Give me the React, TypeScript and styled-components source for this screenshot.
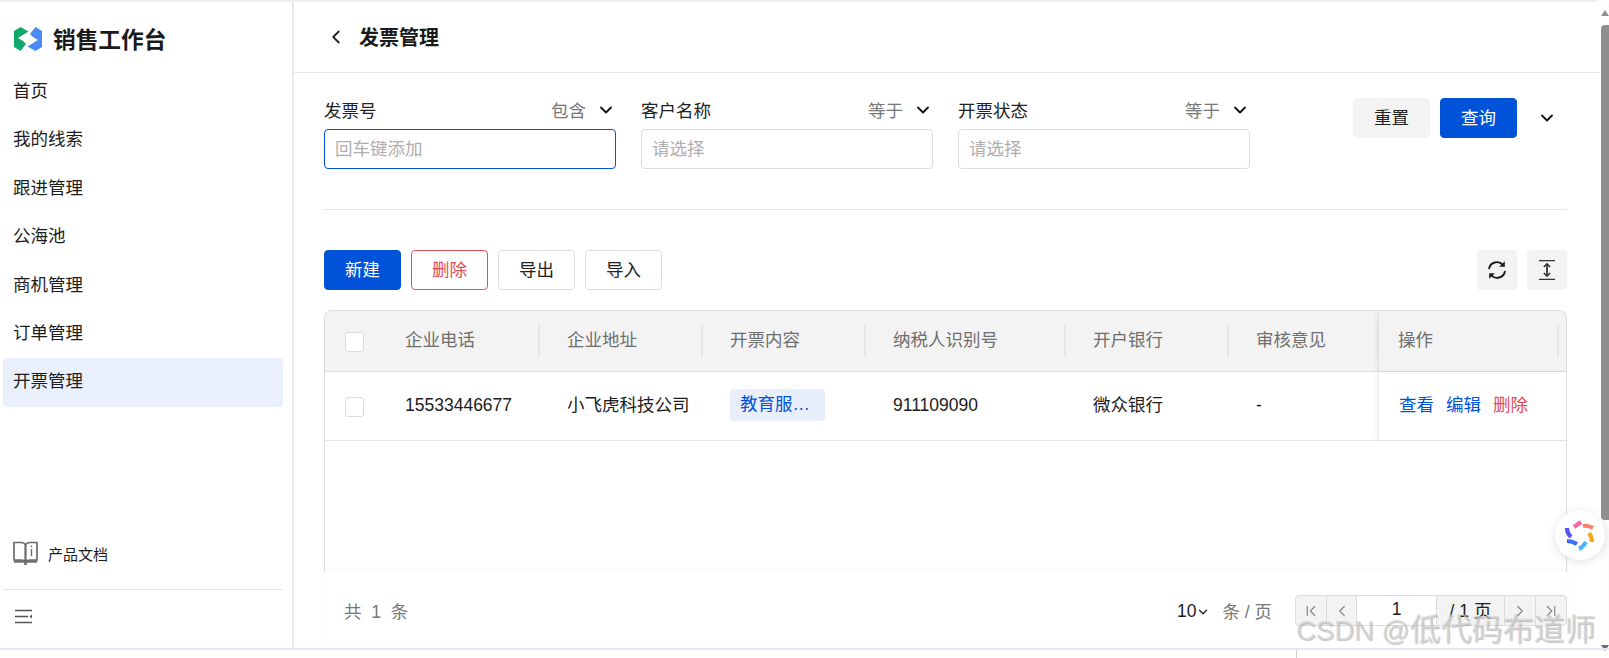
import React from 'react';
import styled, { createGlobalStyle } from 'styled-components';
import { ChevronDown, ChevronFirst, ChevronLast, ChevronLeft, ChevronRight } from 'lucide-react';

const menus = ['首页', '我的线索', '跟进管理', '公海池', '商机管理', '订单管理', '开票管理'];

const filters = [
  { label: '发票号', op: '包含', placeholder: '回车键添加', active: true },
  { label: '客户名称', op: '等于', placeholder: '请选择', active: false },
  { label: '开票状态', op: '等于', placeholder: '请选择', active: false },
];

const columns = ['企业电话', '企业地址', '开票内容', '纳税人识别号', '开户银行', '审核意见'];

const petals = [
  { d: 'M19 17 L26 12', c: '#f2689f' },
  { d: 'M28 16 Q33 15 38 18', c: '#fb8268' },
  { d: 'M34 23 Q37 27 37 32', c: '#f5a623' },
  { d: 'M24 39 Q28 37 31 32', c: '#4fb4fb' },
  { d: 'M12 31 Q17 31 22 34', c: '#3f6cf5' },
  { d: 'M12 18 Q12 23 16 27', c: '#5550f0' },
];

const App = () => {
  return (
    <Page>
      <GlobalStyle />
      <TopStrip />
      <Shell>
        <Sidebar>
          <Logo>
            <svg width="28" height="24" viewBox="0 0 28 24">
              <polygon points="0,4 6.5,0 14.5,4.5 4,11 9,14 12,17 6.5,24 0,20" fill="#10a96b" />
              <polygon points="28,20 21.5,24 13.5,19.5 24,13 19,10 16,7 21.5,0 28,4" fill="#4b8bf5" />
            </svg>
            <LogoText>销售工作台</LogoText>
          </Logo>
          <Menu>
            {menus.map((m) => (
              <MenuItem key={m} $active={m === '开票管理'}>{m}</MenuItem>
            ))}
          </Menu>
          <DocRow>
            <svg width="25" height="25" viewBox="0 0 25 25" fill="none" stroke="#6b6b6b" strokeWidth="1.7">
              <path d="M1 1.5 H8 Q11.5 1.5 12.5 4 V21 Q11.5 19 8 19 H1 Z" />
              <path d="M24 1.5 H17 Q13.5 1.5 12.5 4 V21 Q13.5 19 17 19 H24 Z" />
              <path d="M1 20.5 H24" strokeWidth="2.4" />
              <path d="M12.5 21 V24" strokeWidth="2.6" />
              <path d="M18.5 8 V15 M18.5 4.5 V6.2" strokeWidth="1.4" />
            </svg>
            <DocText>产品文档</DocText>
          </DocRow>
          <Collapse>
            <svg width="19" height="15" viewBox="0 0 19 15" fill="none" stroke="#555" strokeWidth="1.6">
              <path d="M1 1.5 H18 M1 7.5 H14 M1 13.5 H18" />
              <path d="M18 5.5 V9.5 L15.5 7.5 Z" fill="#555" stroke="none" />
            </svg>
          </Collapse>
        </Sidebar>

        <Main>
          <Header>
            <ChevronLeft size={22} color="#222" />
            <Title>发票管理</Title>
          </Header>

          <Content>
            <FilterRow>
              {filters.map((f) => (
                <Field key={f.label}>
                  <FieldHead>
                    <FieldLabel>{f.label}</FieldLabel>
                    <FieldOp>
                      {f.op}
                      <ChevronDown size={20} color="#111" strokeWidth={2.2} />
                    </FieldOp>
                  </FieldHead>
                  <FieldInput $active={f.active} placeholder={f.placeholder} readOnly />
                </Field>
              ))}
              <Actions>
                <Button $kind="ghost">重置</Button>
                <Button $kind="primary">查询</Button>
                <Expand>
                  <ChevronDown size={20} color="#111" strokeWidth={2.2} />
                </Expand>
              </Actions>
            </FilterRow>

            <Divider />

            <Toolbar>
              <ToolGroup>
                <Button $kind="primary">新建</Button>
                <Button $kind="danger">删除</Button>
                <Button $kind="outline">导出</Button>
                <Button $kind="outline">导入</Button>
              </ToolGroup>
              <ToolGroup>
                <IconButton>
                  <svg width="20" height="20" viewBox="0 0 20 20" fill="none" stroke="#1a1a1a" strokeWidth="1.9">
                    <path d="M2 9 A8 8 0 0 1 16 5" />
                    <path d="M18 11 A8 8 0 0 1 4 15" />
                    <path d="M17.8 1.2 V6.8 H12.2 Z" fill="#1a1a1a" stroke="none" />
                    <path d="M2.2 18.8 V13.2 H7.8 Z" fill="#1a1a1a" stroke="none" />
                  </svg>
                </IconButton>
                <IconButton>
                  <svg width="16" height="20" viewBox="0 0 16 20" fill="none" stroke="#333" strokeWidth="1.3">
                    <path d="M0 .7 H16 M0 19.3 H16" />
                    <path d="M8 4 V16" strokeWidth="1.8" />
                    <path d="M4.8 7 L8 3.8 L11.2 7 M4.8 13 L8 16.2 L11.2 13" strokeWidth="1.5" />
                  </svg>
                </IconButton>
              </ToolGroup>
            </Toolbar>

            <Table>
              <HeadRow>
                <CheckCell><Check /></CheckCell>
                {columns.map((c) => (
                  <HeadCell key={c}>{c}</HeadCell>
                ))}
                <ActionHead>操作</ActionHead>
              </HeadRow>
              <BodyRow>
                <CheckCell><Check /></CheckCell>
                <PhoneCell>15533446677</PhoneCell>
                <BodyCell>小飞虎科技公司</BodyCell>
                <TagCell><Tag>教育服…</Tag></TagCell>
                <PhoneCell>911109090</PhoneCell>
                <BodyCell>微众银行</BodyCell>
                <PhoneCell>-</PhoneCell>
                <ActionCell>
                  <LinkText>查看</LinkText>
                  <LinkText>编辑</LinkText>
                  <LinkText $danger>删除</LinkText>
                </ActionCell>
              </BodyRow>
            </Table>

            <Footer>
              <Total>共&nbsp; 1&nbsp; 条</Total>
              <PageSize>
                10
                <ChevronDown size={14} color="#222" strokeWidth={2.4} />
              </PageSize>
              <PerPage>条 / 页</PerPage>
              <Pager>
                <PagerBtn $w={31}><ChevronFirst size={18} strokeWidth={1.6} /></PagerBtn>
                <PagerBtn $w={30}><ChevronLeft size={18} strokeWidth={1.6} /></PagerBtn>
                <PagerInput>1</PagerInput>
                <PagerBtn $w={68} $text>/ 1 页</PagerBtn>
                <PagerBtn $w={31}><ChevronRight size={18} strokeWidth={1.6} /></PagerBtn>
                <PagerBtn $w={30}><ChevronLast size={18} strokeWidth={1.6} /></PagerBtn>
              </Pager>
            </Footer>
          </Content>
        </Main>

        <Scrollbar>
          <ArrowUp />
          <Thumb />
          <ArrowDown />
        </Scrollbar>
      </Shell>
      <BottomStrip>
        <Tick />
      </BottomStrip>

      <FloatBall>
        <svg width="50" height="50" viewBox="0 0 50 50" fill="none" strokeWidth="4.2">
          {petals.map((p) => (
            <path key={p.d} d={p.d} stroke={p.c} />
          ))}
        </svg>
      </FloatBall>

      <Watermark>
        CSDN @<WatermarkCjk>低代码布道师</WatermarkCjk>
      </Watermark>
    </Page>
  );
};

export default App;

const GlobalStyle = createGlobalStyle`
  html, body {
    margin: 0;
    padding: 0;
    background: #fff;
  }
  * {
    box-sizing: border-box;
  }
`;

const Page = styled.div`
  position: relative;
  width: 1609px;
  height: 658px;
  overflow: hidden;
  display: flex;
  flex-direction: column;
  background: #fff;
  color: #1c1c1c;
  font-family: "Liberation Sans", "Noto Sans CJK SC", sans-serif;
  font-size: 17.5px;
`;

const TopStrip = styled.div`
  height: 2px;
  width: 1597px;
  background: #eeeff3;
`;

const Shell = styled.div`
  height: 646px;
  display: grid;
  grid-template-columns: 294px 1fr 8px;
`;

const Sidebar = styled.aside`
  display: flex;
  flex-direction: column;
  border-right: 2px solid #e9e9e9;
  padding: 0 9px 0 3px;
`;

const Logo = styled.div`
  height: 66px;
  padding: 7px 0 0 11px;
  display: flex;
  align-items: center;
  gap: 11px;
`;

const LogoText = styled.span`
  font-size: 22.7px;
  font-weight: 700;
  color: #1a1a1a;
`;

const Menu = styled.nav`
  flex: 1;
`;

const MenuItem = styled.div<{ $active?: boolean }>`
  height: 48.4px;
  line-height: 46px;
  padding-left: 10px;
  border-radius: 4px;
  background: ${(p) => (p.$active ? '#e9f0fc' : 'transparent')};
`;

const DocRow = styled.div`
  height: 34px;
  margin-bottom: 19px;
  padding-left: 10px;
  display: flex;
  align-items: center;
  gap: 10px;
`;

const DocText = styled.span`
  font-size: 15px;
`;

const Collapse = styled.div`
  height: 59px;
  border-top: 1px solid #e5e5e5;
  padding: 18px 0 0 11px;
`;

const Main = styled.main`
  display: flex;
  flex-direction: column;
  min-width: 0;
`;

const Header = styled.header`
  height: 71px;
  flex-shrink: 0;
  padding: 0 0 1px 31px;
  display: flex;
  align-items: center;
  gap: 12px;
  border-bottom: 1px solid #e8e8e8;
`;

const Title = styled.h1`
  margin: 0;
  font-size: 20px;
  font-weight: 700;
  color: #1a1a1a;
`;

const Content = styled.div`
  flex: 1;
  display: flex;
  flex-direction: column;
  padding: 25px 34px 0 30px;
`;

const FilterRow = styled.div`
  display: grid;
  grid-template-columns: 292px 292px 292px 1fr;
  column-gap: 25px;
`;

const Field = styled.div`
  display: flex;
  flex-direction: column;
`;

const FieldHead = styled.div`
  height: 31px;
  display: flex;
  align-items: center;
  justify-content: space-between;
  padding-bottom: 8px;
`;

const FieldLabel = styled.span`
  color: #222;
`;

const FieldOp = styled.span`
  display: flex;
  align-items: center;
  gap: 10px;
  color: #777;
`;

const FieldInput = styled.input<{ $active?: boolean }>`
  height: 40px;
  padding: 0 10px;
  border: 1px solid ${(p) => (p.$active ? '#0052d9' : '#dcdcdc')};
  border-radius: 4px;
  outline: none;
  font: inherit;
  color: #222;
  &::placeholder {
    color: #aeaeae;
  }
`;

const Actions = styled.div`
  display: flex;
  justify-content: flex-end;
  align-items: flex-start;
  gap: 10px;
`;

const Expand = styled.span`
  width: 40px;
  height: 40px;
  display: flex;
  align-items: center;
  justify-content: center;
`;

const buttonKinds = {
  primary: 'background: #0052d9; color: #fff; border-color: #0052d9;',
  ghost: 'background: #f3f3f3; color: #222; border-color: #f3f3f3;',
  danger: 'background: #fff; color: #e34d59; border-color: #e34d59;',
  outline: 'background: #fff; color: #222; border-color: #dcdcdc;',
};

const Button = styled.button<{ $kind: keyof typeof buttonKinds }>`
  width: 77px;
  height: 40px;
  border: 1px solid;
  border-radius: 4px;
  font: inherit;
  font-size: 17.5px;
  padding: 0 0 4px;
  ${(p) => buttonKinds[p.$kind]}
`;

const Divider = styled.div`
  height: 1px;
  margin-top: 40px;
  background: #e6e6e6;
`;

const Toolbar = styled.div`
  margin-top: 40px;
  display: flex;
  justify-content: space-between;
`;

const ToolGroup = styled.div`
  display: flex;
  gap: 10px;
`;

const IconButton = styled.span`
  width: 40px;
  height: 40px;
  border-radius: 4px;
  background: #f3f3f3;
  display: flex;
  align-items: center;
  justify-content: center;
`;

const Table = styled.div`
  margin-top: 20px;
  height: 262px;
  flex-shrink: 0;
  border: 1px solid #dcdcdc;
  border-bottom: none;
  border-radius: 8px 8px 0 0;
  overflow: hidden;
`;

const rowColumns = '52px 162px 163px 163px 200px 163px 150px 1fr';

const HeadRow = styled.div`
  display: grid;
  grid-template-columns: ${rowColumns};
  height: 61px;
  background: #f3f3f3;
  border-bottom: 1px solid #dfdfdf;
  align-items: center;
  color: #6e6e6e;
`;

const BodyRow = styled.div`
  display: grid;
  grid-template-columns: ${rowColumns};
  height: 69px;
  border-bottom: 1px solid #e6e6e6;
  align-items: center;
`;

const CheckCell = styled.div`
  padding: 2px 0 0 20px;
  display: flex;
  align-items: center;
`;

const Check = styled.span`
  width: 19px;
  height: 20px;
  background: #fff;
  border: 1px solid #dcdcdc;
  border-radius: 3px;
`;

const HeadCell = styled.div`
  position: relative;
  height: 100%;
  padding: 0 0 5px 28px;
  display: flex;
  align-items: center;
  &::after {
    content: '';
    position: absolute;
    right: -1px;
    top: 14px;
    width: 2px;
    height: 32px;
    background: #e6e6e6;
  }
`;

const ActionHead = styled(HeadCell)`
  padding-left: 19px;
  border-left: 1px solid #e2e2e2;
  box-shadow: -3px 0 4px rgba(0, 0, 0, 0.04);
  &::after {
    right: 7px;
  }
`;

const BodyCell = styled.div`
  padding: 0 0 5px 28px;
`;

const PhoneCell = styled(BodyCell)`
  padding-bottom: 2px;
`;

const TagCell = styled(BodyCell)`
  padding-bottom: 2px;
  display: flex;
`;

const Tag = styled.span`
  width: 95px;
  height: 32px;
  line-height: 30px;
  padding-left: 10px;
  border-radius: 4px;
  background: #e8eefa;
  color: #0052d9;
`;

const ActionCell = styled.div`
  height: 100%;
  padding: 0 0 6px 20px;
  display: flex;
  align-items: center;
  gap: 12px;
  border-left: 1px solid #e8e8e8;
  box-shadow: -3px 0 4px rgba(0, 0, 0, 0.04);
`;

const LinkText = styled.span<{ $danger?: boolean }>`
  color: ${(p) => (p.$danger ? '#e34d59' : '#0052d9')};
`;

const Footer = styled.div`
  position: relative;
  height: 76px;
  padding: 23px 0 0 20px;
  display: flex;
  align-items: flex-start;
  background: #fff;
  box-shadow: 0 -4px 8px rgba(0, 0, 0, 0.025);
`;

const Total = styled.span`
  line-height: 35px;
  color: #777;
  margin-right: auto;
`;

const PageSize = styled.span`
  display: flex;
  align-items: center;
  height: 33px;
  margin-right: 12px;
  font-size: 17.5px;
`;

const PerPage = styled.span`
  line-height: 34px;
  color: #777;
  margin-right: 23px;
`;

const Pager = styled.div`
  display: flex;
  height: 31px;
  border: 1px solid #dcdcdc;
  border-radius: 4px;
  background: #f3f3f3;
  overflow: hidden;
`;

const PagerBtn = styled.span<{ $w: number; $text?: boolean }>`
  width: ${(p) => p.$w}px;
  display: flex;
  align-items: center;
  justify-content: center;
  padding-bottom: ${(p) => (p.$text ? '2px' : '0')};
  color: ${(p) => (p.$text ? '#222' : '#888')};
  border-right: 1px solid #dcdcdc;
  &:last-child {
    border-right: none;
  }
`;

const PagerInput = styled.span`
  width: 80px;
  padding-bottom: 2px;
  background: #fff;
  border-right: 1px solid #dcdcdc;
  display: flex;
  align-items: center;
  justify-content: center;
`;

const Scrollbar = styled.div`
  display: flex;
  flex-direction: column;
  align-items: center;
  padding-top: 8px;
  background: #fcfcfc;
`;

const ArrowUp = styled.span`
  border-left: 4.5px solid transparent;
  border-right: 4.5px solid transparent;
  border-bottom: 6px solid #8f8f8f;
`;

const Thumb = styled.span`
  width: 8px;
  height: 495px;
  margin-top: 9px;
  background: #8f8f8f;
  border-radius: 4px 0 0 4px;
`;

const ArrowDown = styled.span`
  margin-top: auto;
  margin-bottom: -3px;
  border-left: 4.5px solid transparent;
  border-right: 4.5px solid transparent;
  border-top: 6px solid #6e6e6e;
`;

const BottomStrip = styled.div`
  flex: 1;
  border-top: 2px solid #e6e6ee;
  padding-left: 1296px;
`;

const Tick = styled.div`
  width: 1px;
  height: 100%;
  background: #cfcfcf;
`;

const FloatBall = styled.div`
  position: absolute;
  left: 1555px;
  top: 510px;
  width: 50px;
  height: 50px;
  border-radius: 50%;
  background: #fff;
  box-shadow: 0 2px 10px rgba(0, 0, 0, 0.12);
`;

const Watermark = styled.div`
  position: absolute;
  left: 1296px;
  top: 612px;
  white-space: nowrap;
  font-size: 27.5px;
  line-height: 36px;
  color: rgba(212, 212, 212, 0.7);
  text-shadow: 1px 1px 1px rgba(90, 90, 90, 0.35);
`;

const WatermarkCjk = styled.span`
  font-size: 31px;
`;
